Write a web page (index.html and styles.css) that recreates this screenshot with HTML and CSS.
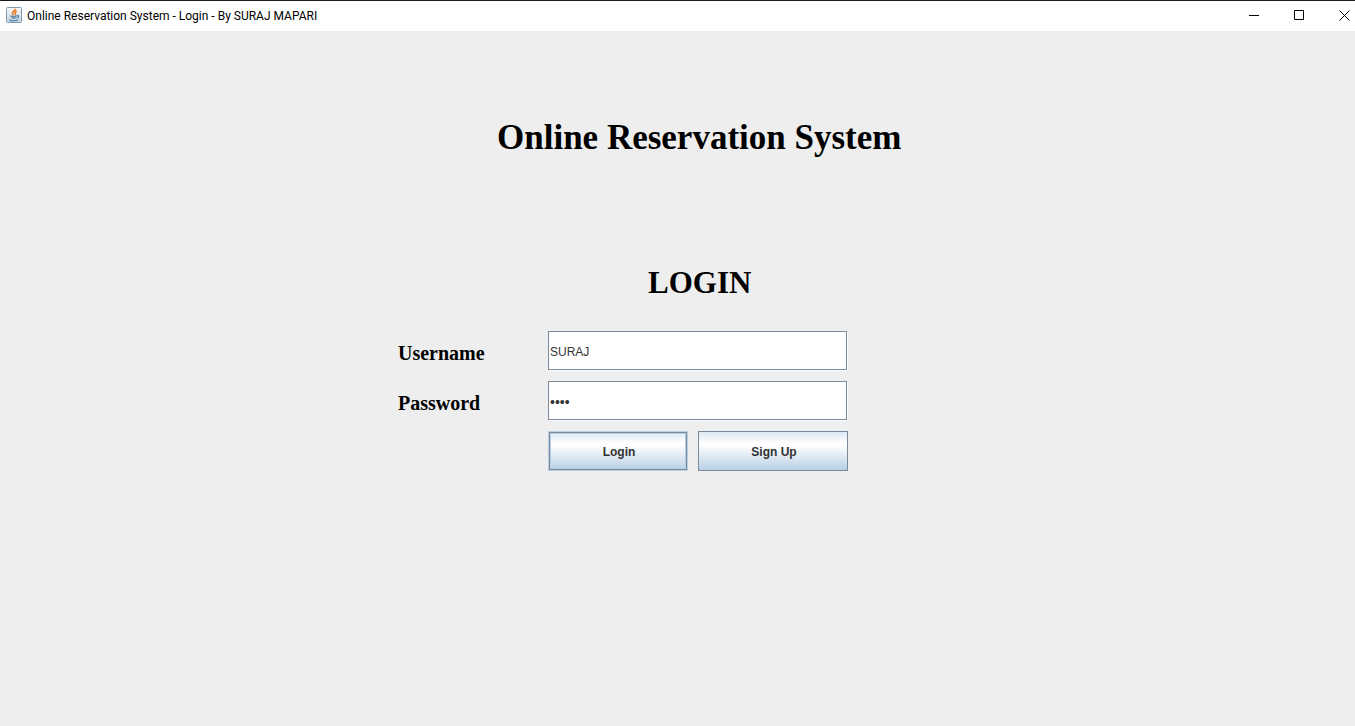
FILE: index.html
```html
<!DOCTYPE html>
<html lang="en">
<head>
<meta charset="utf-8">
<title>Online Reservation System - Login</title>
<link rel="stylesheet" href="styles.css">
</head>
<body>
<header class="titlebar">
  <svg class="app-icon" viewBox="0 0 16 16" aria-hidden="true">
    <defs><linearGradient id="tile" x1="0" y1="0" x2="0" y2="1"><stop offset="0" stop-color="#f8fafb"/><stop offset="1" stop-color="#c3d3de"/></linearGradient></defs>
    <rect x=".5" y=".5" width="15" height="15" rx="1" fill="url(#tile)" stroke="#7f9bb0"/>
    <path d="M9.300 1.800c.5 2-4 2.800-2.700 4.800.3.500.7.8.9 1.400M10.800 4c-1.800.7-2.400 1.500-1.600 2.300.5.700.2 1.200-.4 1.600" fill="none" stroke="#ea7d20" stroke-width="1.600"/>
    <path d="M4.300 8.700c1.500.7 5 .6 6.500 0M11 8.700c2.400-.3 1.800 1.800-.1 2.100M5.200 10.500c1.300.6 3.700.6 5.100 0M4 12.500c-1.400 1.400 6 1.900 8.200.1" fill="none" stroke="#4d7a9c" stroke-width="1.200"/>
  </svg>
  <span class="window-title">Online Reservation System - Login - By SURAJ MAPARI</span>
  <div class="window-controls">
    <button type="button" aria-label="Minimize"><svg viewBox="0 0 11 11"><path d="M0 5.500H10"/></svg></button>
    <button type="button" aria-label="Maximize"><svg viewBox="0 0 11 11"><path d="M.5.5h9v9h-9z"/></svg></button>
    <button type="button" aria-label="Close"><svg viewBox="0 0 11 11"><path d="M.5.5l10 10M10.500.5l-10 10"/></svg></button>
  </div>
</header>
<main class="content">
  <h1 class="app-name">Online Reservation System</h1>
  <h2 class="form-title">LOGIN</h2>
  <form class="login-form">
    <label for="username">Username</label>
    <input class="field" id="username" type="text" value="SURAJ">
    <label for="password">Password</label>
    <input class="field field-password" id="password" type="password" value="1234">
    <button class="action action-login" type="button">Login</button>
    <button class="action" type="button">Sign Up</button>
  </form>
</main>
</body>
</html>
```
FILE: styles.css
```css
* { box-sizing: border-box; }
body {
  margin: 0;
  min-height: 100vh;
  overflow-x: hidden;
  background: #eeeeee;
  color: #000;
}
.titlebar {
  display: flex;
  align-items: center;
  height: 31px;
  padding-left: 6px;
  padding-bottom: 2px;
  border-top: 1px solid #1b1b1b;
  background: #fff;
  font: 12px/16px Roboto, sans-serif;
}
.app-icon { width: 16px; height: 16px; margin-right: 5px; }
.window-title { padding-top: 1px; }
.window-controls { display: flex; margin-left: auto; margin-right: -12px; }
.window-controls button {
  display: flex;
  align-items: center;
  justify-content: center;
  width: 45px;
  height: 27px;
  padding: 0;
  border: 0;
  background: none;
}
.window-controls svg {
  width: 11px;
  height: 11px;
  fill: none;
  stroke: #000;
  stroke-width: 1;
}
.content {
  max-width: 850px;
  margin-left: 398px;
  padding-top: 87px;
  font-family: "Liberation Serif", serif;
}
.app-name {
  margin: 0 0 105px;
  padding-left: 99px;
  font-size: 35px;
  line-height: 40px;
}
.form-title {
  margin: 0 0 28px;
  padding-left: 250px;
  font-size: 31px;
  line-height: 40px;
}
.login-form {
  display: grid;
  grid-template-columns: 140px 140px 150px;
  gap: 10px;
}
.login-form label {
  font-size: 20px;
  font-weight: bold;
  line-height: 44px;
  height: 40px;
}
.field {
  grid-column: span 2;
  width: 299px;
  height: 39px;
  padding: 2px 1px 0;
  border: 1px solid #7a8a99;
  border-radius: 0;
  outline: 0;
  background: #fff;
  box-shadow: 1px 1px #fff;
  color: #333;
  font: 12px/16px "Liberation Sans", sans-serif;
}
.field-password { font-size: 14px; }
.action {
  height: 40px;
  padding: 2px 0 0 2px;
  border: 1px solid #7a8a99;
  border-radius: 0;
  background: linear-gradient(#dde8f3, #fff 30%, #fff 35%, #b8cfe5);
  color: #333;
  font: bold 12px/16px "Liberation Sans", sans-serif;
}
.action-login {
  grid-column: 2;
  border-color: #b8cfe5;
  box-shadow: inset 0 0 0 1px #7a8a99, inset 0 0 0 2px #b8cfe5;
}
```
